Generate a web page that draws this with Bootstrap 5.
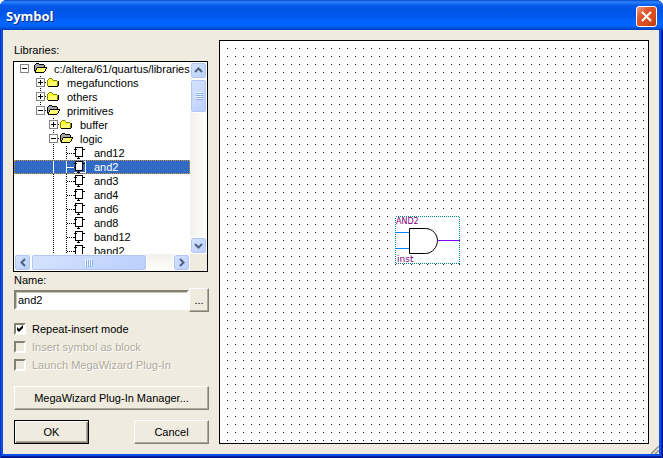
<!DOCTYPE html>
<html lang="en">
<head>
<meta charset="utf-8">
<meta name="viewport" content="width=device-width, initial-scale=1">
<title>Symbol</title>
<link href="https://cdn.jsdelivr.net/npm/bootstrap@5.3.0/dist/css/bootstrap.min.css" rel="stylesheet">
<style>
  :root { --face: #efebde; --shade: #848173; --mid: #adaa9c; }
  body { font: 11px/14px "Liberation Sans", Arial, sans-serif; color: #000; background: #fff; }
  .win { border-radius: 7px 7px 0 0; background: #0a50e6; overflow: hidden;
    box-shadow: inset 1px 0 #0a31c8, inset -1px 0 #00138c, inset -2px 0 #0030c8, inset 0 -1px #00107b, inset 0 -2px #0020a8;
    padding: 0 4px 4px 3px; }
  .titlebar { height: 30px; margin: 0 -4px 0 -3px; padding: 3px 6px 0 6px;
    background: linear-gradient(#0848c8 0, #2a86ff 2px, #0a5cec 5px, #0054e3 9px, #0058ec 16px, #0066ff 22px, #0064fc 26px, #0050dc 28px, #0040b8 30px); }
  .titlebar h1 { font: bold 13px/20px "Open Sans", sans-serif; color: #fff; text-shadow: 1px 1px #0a2a80; }
  .closer { width: 21px; height: 21px; border: 1px solid #fff; border-radius: 3px; background: linear-gradient(135deg, #f0a088, #e0552c 35%, #d84a20 70%, #b83a10); }
  .client { background: var(--face); padding: 10px; gap: 10px; }
  .side { width: 196px; }
  .lbl { padding-left: 1px; line-height: 21px; }
  .lbl-name { line-height: 16px; }
  .frame { border: 1px solid #000; background: #fff; }
  .treebox { width: 195px; }
  .tree li { height: 14px; white-space: nowrap; }
  .tree svg { height: 14px; }
  .l0 { width: 40px; } .l1 { width: 53px; } .l2 { width: 66px; } .l3 { width: 80px; }
  .picked { background: #316ac5; color: #fff; outline: 1px dotted #ce953a; outline-offset: -1px; }
  .guide { stroke: #000; stroke-dasharray: 1 1; fill: none; }
  .picked .guide { stroke: #fff; stroke-dasharray: none; }
  .track-v { width: 17px; background: linear-gradient(90deg, #f3f1ec, #fefefb); }
  .track-h { height: 17px; background: linear-gradient(#f3f1ec, #fefefb); }
  .sb { border: 1px solid #fff; border-radius: 3px; background: linear-gradient(135deg, #d6e3ff, #bacffc); box-shadow: inset 0 0 0 1px #b0c6f6; }
  .arrow { width: 17px; height: 17px; }
  .thumb-v { width: 17px; height: 34px; }
  .thumb-h { width: 116px; height: 17px; }
  .corner { width: 17px; background: var(--face); }
  .below { padding-left: 1px; }
  .field { height: 20px; border: 2px solid; border-color: var(--shade) #fff #fff var(--shade); box-shadow: inset 1px 1px #c8c4b4; padding: 0 2px; min-width: 0; background: #fff; }
  .cmd { height: 24px; border: 1px solid; border-color: #fff var(--shade) var(--shade) #fff; border-radius: 0; box-shadow: inset -1px -1px var(--mid); background: var(--face); font-size: 11px; line-height: 14px; padding: 0; color: #000; }
  .cmd:hover { background: #f6f3e8; border-color: #fff var(--shade) var(--shade) #fff; }
  .browse { width: 20px; }
  .short { width: 75px; }
  .main-cmd, .main-cmd:hover { border-color: #000; box-shadow: inset 1px 1px #fff, inset -1px -1px var(--shade), inset -2px -2px var(--mid); }
  .decide { padding-top: 10px; }
  .opt { height: 18px; gap: 6px; }
  .opt input { appearance: none; width: 12px; height: 12px; margin: 0; border: 2px solid; border-color: var(--shade) #fff #fff var(--shade); background: #fff; }
  .opt input:disabled { background: var(--face); }
  .opt input:checked { background: #fff url("data:image/svg+xml,%3Csvg xmlns='http://www.w3.org/2000/svg' viewBox='0 0 8 8'%3E%3Cpath d='M1 2v3l2 2 4-4V0L3 4z'/%3E%3C/svg%3E") center / 8px 8px no-repeat; }
  .off { color: #adaa9c; text-shadow: 1px 1px #fff; }
  .sheet { background: conic-gradient(from 90deg at 7px 7px, #000 25%, #fff 0) 0 0 / 8px 8px; }
  .part { left: 175px; top: 175px; }
  .part text { fill: #800080; font-family: "DejaVu Sans", sans-serif; }
  .grip { right: 0; bottom: 0; }
</style>
<script src="https://cdn.jsdelivr.net/npm/bootstrap@5.3.0/dist/js/bootstrap.bundle.min.js"></script>
</head>
<body>
<svg class="d-none" xmlns="http://www.w3.org/2000/svg" shape-rendering="crispEdges">
  <symbol id="minus" viewBox="0 0 9 9"><path d="M.5.5h8v8h-8z" fill="#fff" stroke="#848484"/><path d="M2 4.500h5" stroke="#000"/></symbol>
  <symbol id="plus" viewBox="0 0 9 9"><path d="M.5.5h8v8h-8z" fill="#fff" stroke="#848484"/><path d="M2 4.500h5M4.500 2v5" stroke="#000"/></symbol>
  <symbol id="shut" viewBox="0 0 13 10"><path d="M1 2h1V1h3v1h5v1h1v6H1z" fill="#ffff31"/><path d="M2 4h1v1H2zM4 4h1v1H4zM6 4h1v1H6zM8 4h1v1H8zM3 5h1v1H3zM5 5h1v1H5zM7 5h1v1H7zM9 5h1v1H9zM2 6h1v1H2zM4 6h1v1H4zM6 6h1v1H6zM8 6h1v1H8zM3 7h1v1H3zM5 7h1v1H5zM7 7h1v1H7zM9 7h1v1H9z" fill="#ffffb5"/><path d="M0 2h1v6H0zM1 1h1v1H1zM2 0h3v1H2zM5 1h1v1H5zM6 2h4v1H6zM11 3h0v5h-1V3z" fill="#848400"/><path d="M1 9h10V8h1V3h-1v5H1z" fill="#000"/></symbol>
  <symbol id="open" viewBox="0 0 13 10"><path d="M0 2h1V1h1V0h3v1h1v1h4v1h1v2H4L1 9H0z" fill="#a5a5a5"/><path d="M0 2h1v6H0zM1 1h1v1H1zM2 0h3v1H2zM5 1h5v1H5zM10 2h1v2h-1zM3 4h10v1H3zM2 5h1v2H2zM1 7h1v2H1zM1 9h9v1H1zM12 5h1v1h-1zM11 6h1v2h-1zM10 8h1v1h-1z" fill="#000"/><path d="M3 5h9v1h-1v2h-1v1H2V7h1z" fill="#ffff31"/><path d="M4 5h1v1H4zM6 5h1v1H6zM8 5h1v1H8zM10 5h1v1h-1zM3 6h1v1H3zM5 6h1v1H5zM7 6h1v1H7zM9 6h1v1H9zM4 7h1v1H4zM6 7h1v1H6zM8 7h1v1H8zM3 8h1v1H3zM5 8h1v1H5zM7 8h1v1H7z" fill="#ffffb5"/></symbol>
  <symbol id="gate" viewBox="0 0 12 14"><path d="M1.500 1.500h7v9h-7z" fill="#fff" stroke="#000"/><path d="M0 3.500h3M0 7.500h1M9 3.500h2M4.500 11v2M3 12.500h3" stroke="#000" fill="none"/></symbol>
  <symbol id="leaf" viewBox="0 0 80 14"><path class="guide" d="M39.500 0v14M52.500 0v14M53 7.500h7"/><use href="#gate" x="60" width="12" height="14"/></symbol>
</svg>

<main class="win vh-100 d-flex flex-column">
  <header class="titlebar d-flex align-items-center justify-content-between">
    <h1 class="m-0">Symbol</h1>
    <button class="closer p-0 d-flex align-items-center justify-content-center" type="button" aria-label="Close">
      <svg width="13" height="13" viewBox="0 0 13 13"><path d="m2 2 9 9m0-9-9 9" stroke="#fff" stroke-width="2"/></svg>
    </button>
  </header>

  <div class="client d-flex flex-grow-1 position-relative overflow-hidden">
    <section class="side d-flex flex-column flex-shrink-0">
      <div class="lbl">Libraries:</div>
      <div class="treebox frame d-flex flex-column flex-grow-1 overflow-hidden">
        <div class="d-flex flex-grow-1 overflow-hidden">
          <ul class="tree list-unstyled m-0 flex-grow-1 overflow-hidden">
            <li class="d-flex"><svg class="l0 flex-shrink-0" shape-rendering="crispEdges"><use href="#minus" x="6" y="2" width="9" height="9"/><use href="#open" x="20" y="1" width="13" height="10"/></svg>c:/altera/61/quartus/libraries</li>
            <li class="d-flex"><svg class="l1 flex-shrink-0" shape-rendering="crispEdges"><path class="guide" d="M26.500 0v14M31 6.500h2"/><use href="#plus" x="22" y="2" width="9" height="9"/><use href="#shut" x="33" y="2" width="13" height="10"/></svg>megafunctions</li>
            <li class="d-flex"><svg class="l1 flex-shrink-0" shape-rendering="crispEdges"><path class="guide" d="M26.500 0v14M31 6.500h2"/><use href="#plus" x="22" y="2" width="9" height="9"/><use href="#shut" x="33" y="2" width="13" height="10"/></svg>others</li>
            <li class="d-flex"><svg class="l1 flex-shrink-0" shape-rendering="crispEdges"><path class="guide" d="M26.500 0v7M31 6.500h2"/><use href="#minus" x="22" y="2" width="9" height="9"/><use href="#open" x="33" y="1" width="13" height="10"/></svg>primitives</li>
            <li class="d-flex"><svg class="l2 flex-shrink-0" shape-rendering="crispEdges"><path class="guide" d="M39.500 0v14M44 6.500h2"/><use href="#plus" x="35" y="2" width="9" height="9"/><use href="#shut" x="46" y="2" width="13" height="10"/></svg>buffer</li>
            <li class="d-flex"><svg class="l2 flex-shrink-0" shape-rendering="crispEdges"><path class="guide" d="M39.500 0v14M44 6.500h2"/><use href="#minus" x="35" y="2" width="9" height="9"/><use href="#open" x="46" y="1" width="13" height="10"/></svg>logic</li>
            <li class="d-flex"><svg class="l3 flex-shrink-0" shape-rendering="crispEdges"><use href="#leaf" width="80" height="14"/></svg>and12</li>
            <li class="d-flex picked"><svg class="l3 flex-shrink-0" shape-rendering="crispEdges"><path class="guide" d="M39.500 1v12M52.500 1v12M53 7.500h7M60 12.500h11.500v-11h-2"/><use href="#gate" x="60" width="12" height="14"/></svg>and2</li>
            <li class="d-flex"><svg class="l3 flex-shrink-0" shape-rendering="crispEdges"><use href="#leaf" width="80" height="14"/></svg>and3</li>
            <li class="d-flex"><svg class="l3 flex-shrink-0" shape-rendering="crispEdges"><use href="#leaf" width="80" height="14"/></svg>and4</li>
            <li class="d-flex"><svg class="l3 flex-shrink-0" shape-rendering="crispEdges"><use href="#leaf" width="80" height="14"/></svg>and6</li>
            <li class="d-flex"><svg class="l3 flex-shrink-0" shape-rendering="crispEdges"><use href="#leaf" width="80" height="14"/></svg>and8</li>
            <li class="d-flex"><svg class="l3 flex-shrink-0" shape-rendering="crispEdges"><use href="#leaf" width="80" height="14"/></svg>band12</li>
            <li class="d-flex"><svg class="l3 flex-shrink-0" shape-rendering="crispEdges"><use href="#leaf" width="80" height="14"/></svg>band2</li>
          </ul>
          <div class="track-v d-flex flex-column flex-shrink-0">
            <div class="sb arrow d-flex align-items-center justify-content-center"><svg width="9" height="6"><path d="m1 5 3.500-3.500L8 5" fill="none" stroke="#4d6185" stroke-width="2"/></svg></div>
            <div class="sb thumb-v d-flex align-items-center justify-content-center mb-auto"><svg width="8" height="8" shape-rendering="crispEdges"><path d="M0 .5h7M0 2.500h7M0 4.500h7M0 6.500h7" stroke="#eef4fe"/><path d="M1 1.500h7M1 3.500h7M1 5.500h7M1 7.500h7" stroke="#8cb0f8"/></svg></div>
            <div class="sb arrow d-flex align-items-center justify-content-center"><svg width="9" height="6"><path d="m1 1 3.500 3.500L8 1" fill="none" stroke="#4d6185" stroke-width="2"/></svg></div>
          </div>
        </div>
        <div class="d-flex flex-shrink-0">
          <div class="track-h d-flex flex-grow-1">
            <div class="sb arrow d-flex align-items-center justify-content-center"><svg width="6" height="9"><path d="M5 1 1.500 4.500 5 8" fill="none" stroke="#4d6185" stroke-width="2"/></svg></div>
            <div class="sb thumb-h d-flex align-items-center justify-content-center me-auto"><svg width="8" height="8" shape-rendering="crispEdges"><path d="M.5 0v7M2.500 0v7M4.500 0v7M6.500 0v7" stroke="#eef4fe"/><path d="M1.500 1v7M3.500 1v7M5.500 1v7M7.500 1v7" stroke="#8cb0f8"/></svg></div>
            <div class="sb arrow d-flex align-items-center justify-content-center"><svg width="6" height="9"><path d="m1 1 3.500 3.500L1 8" fill="none" stroke="#4d6185" stroke-width="2"/></svg></div>
          </div>
          <div class="corner"></div>
        </div>
      </div>
      <label class="lbl lbl-name" for="name">Name:</label>
      <div class="below d-flex align-items-center">
        <input class="field flex-grow-1" id="name" type="text" value="and2">
        <button class="cmd btn browse flex-shrink-0" type="button">...</button>
      </div>
      <div class="below pt-2">
        <div class="opt d-flex align-items-center"><input type="checkbox" id="repeat" checked><label for="repeat">Repeat-insert mode</label></div>
        <div class="opt d-flex align-items-center"><input type="checkbox" id="block" disabled><label class="off" for="block">Insert symbol as block</label></div>
        <div class="opt d-flex align-items-center"><input type="checkbox" id="launch" disabled><label class="off" for="launch">Launch MegaWizard Plug-In</label></div>
      </div>
      <div class="below d-grid mt-2 pt-1">
        <button class="cmd btn" type="button">MegaWizard Plug-In Manager...</button>
      </div>
      <div class="below decide d-flex justify-content-between">
        <button class="cmd btn short main-cmd" type="button">OK</button>
        <button class="cmd btn short" type="button">Cancel</button>
      </div>
    </section>

    <section class="sheet frame flex-grow-1 position-relative overflow-hidden">
      <svg class="part position-absolute" width="65" height="49" viewBox="0 0 65 49">
        <path d="M0 0h65v48H0z" fill="#fff"/>
        <path d="M.5.5h64v47H.5z" fill="none" stroke="#008484" stroke-dasharray="1 1" shape-rendering="crispEdges"/>
        <path d="M14.500 12.500h16c7 0 12 6 12 12s-5 13-12 13h-16z" fill="#fff" stroke="#000"/>
        <path d="M1 16.500h13M1 32.500h13" stroke="#0084ff"/>
        <path d="M43 24.500h22" stroke="#8400ff"/>
        <text x="1" y="8" font-size="8">AND2</text>
        <text x="2" y="46" font-size="9">inst</text>
      </svg>
    </section>
    <svg class="grip position-absolute" width="10" height="10"><path d="M1 10 10 1M5 10l5-5M9 10l1-1" stroke="#fff" stroke-width="1"/><path d="M2 10l8-8M6 10l4-4" stroke="#8c8a7c" stroke-width="1.500"/></svg>
  </div>
</main>
</body>
</html>
